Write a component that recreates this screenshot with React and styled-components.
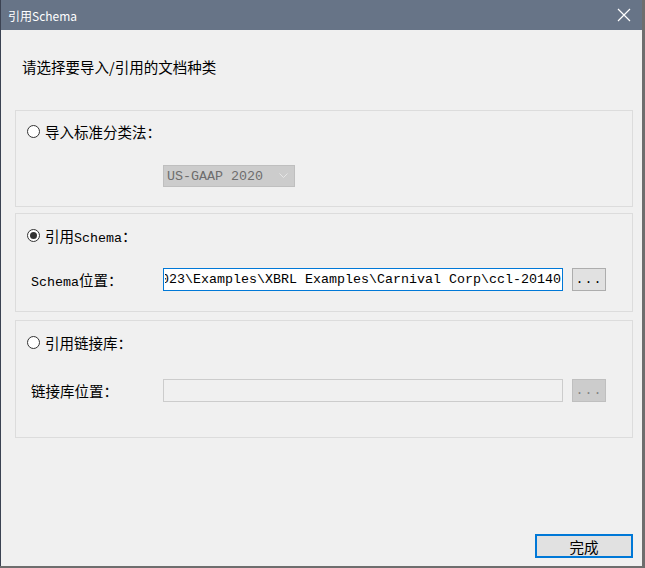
import React, { useState } from 'react'
import styled, { createGlobalStyle } from 'styled-components'

const GlobalStyle = createGlobalStyle`
  html, body { margin: 0; padding: 0; background: #6e6e6e; }
  body { font-family: "Noto Sans CJK SC", "Liberation Sans", sans-serif; }
`

const Frame = styled.div`
  width: 645px;
  height: 568px;
  background: #6e6e6e;
`
const Window = styled.div`
  width: 641px;
  height: 566px;
  border-left: 1px solid #3b4252;
  background: #f0f0f0;
  display: flex;
  flex-direction: column;
`
const TitleBar = styled.div`
  height: 30px;
  background: #677487;
  display: flex;
  align-items: center;
  justify-content: space-between;
  padding: 0 8px 0 7px;
  color: #fff;
  font-size: 12px;
`
const CloseBtn = styled.div`
  width: 14px;
  height: 14px;
  display: flex;
  margin-right: 3px;
`
const Content = styled.div`
  flex: 1;
  display: flex;
  flex-direction: column;
  padding: 0 9px 0 14px;
`
const Prompt = styled.div`
  margin: 27px 0 0 7px;
  height: 20px;
  line-height: 20px;
  font-size: 14.5px;
  color: #000;
`
const Groups = styled.div`
  margin-top: 33px;
  display: flex;
  flex-direction: column;
  gap: 6px;
`
const Group = styled.div`
  border: 1px solid #dcdcdc;
  height: ${p => p.$h}px;
  box-sizing: border-box;
  margin-top: ${p => p.$mt || 0}px;
  padding-top: ${p => p.$top}px;
  display: flex;
  flex-direction: column;
`
const RadioRow = styled.label`
  display: flex;
  align-items: center;
  height: 20px;
  padding-left: 11px;
  gap: 5px;
  font-size: 14.5px;
  color: #000;
  cursor: default;
`
const Mono = styled.span`
  font-family: "Liberation Mono", "Noto Sans CJK SC", monospace;
  font-size: 13.33px;
`
const RadioDot = styled.span`
  width: 11px;
  height: 11px;
  border-radius: 50%;
  border: 1px solid #333;
  background: #fff;
  display: flex;
  align-items: center;
  justify-content: center;
  &::after {
    content: "";
    width: 7px;
    height: 7px;
    border-radius: 50%;
    background: ${p => (p.$on ? '#333' : 'transparent')};
  }
`
const FieldRow = styled.div`
  display: flex;
  align-items: center;
  margin-top: ${p => p.$gap}px;
  padding-left: 15px;
`
const FieldLabel = styled.div`
  width: 132px;
  font-size: 14.5px;
  color: #000;
`
const Select = styled.div`
  width: 132px;
  height: 22px;
  box-sizing: border-box;
  background: #cccccc;
  border: 1px solid #bfbfbf;
  display: flex;
  align-items: center;
  justify-content: space-between;
  padding: 0 6px 0 3px;
  color: #6d6d6d;
  font-family: "Liberation Mono", monospace;
  font-size: 13.33px;
`
const PathInput = styled.input`
  width: 400px;
  height: 23px;
  box-sizing: border-box;
  border: 1px solid ${p => (p.disabled ? '#cccccc' : '#0078d7')};
  background: ${p => (p.disabled ? '#f0f0f0' : '#fff')};
  outline: none;
  padding: 0 1px;
  text-indent: -4px;
  font-family: "Liberation Mono", monospace;
  font-size: 13.33px;
  color: #000;
`
const BrowseBtn = styled.button`
  margin-left: 9px;
  width: 34px;
  height: 23px;
  box-sizing: border-box;
  border: 1px solid ${p => (p.disabled ? '#bfbfbf' : '#adadad')};
  background: ${p => (p.disabled ? '#cccccc' : '#e1e1e1')};
  color: ${p => (p.disabled ? '#838383' : '#000')};
  font-family: "Liberation Mono", monospace;
  font-size: 13.33px;
  padding: 0;
  letter-spacing: 1px;
`
const Footer = styled.div`
  margin-top: auto;
  display: flex;
  justify-content: flex-end;
  padding-bottom: 8px;
`
const FinishBtn = styled.button`
  width: 98px;
  height: 24px;
  box-sizing: border-box;
  border: 2px solid #0078d7;
  background: #e1e1e1;
  font-family: "Noto Sans CJK SC", sans-serif;
  font-size: 14.5px;
  color: #000;
  padding: 0;
`

const visiblePath = '023\\Examples\\XBRL Examples\\Carnival Corp\\ccl-20140'

export default function App() {
  const [mode, setMode] = useState('schema')
  return (
    <Frame>
      <GlobalStyle />
      <Window>
        <TitleBar>
          <span>引用Schema</span>
          <CloseBtn>
            <svg width="14" height="14" viewBox="0 0 14 14">
              <path d="M1 1 L13 13 M13 1 L1 13" stroke="#fff" strokeWidth="1.2" />
            </svg>
          </CloseBtn>
        </TitleBar>
        <Content>
          <Prompt>请选择要导入/引用的文档种类</Prompt>
          <Groups>
            <Group $h={97} $top={10}>
              <RadioRow onClick={() => setMode('taxonomy')}>
                <RadioDot $on={mode === 'taxonomy'} />
                导入标准分类法：
              </RadioRow>
              <FieldRow $gap={24}>
                <FieldLabel />
                <Select>
                  <span>US-GAAP 2020</span>
                  <svg width="9" height="6" viewBox="0 0 9 6">
                    <path d="M0.5 0.5 L4.5 4.5 L8.5 0.5" stroke="#e6e6e6" fill="none" />
                  </svg>
                </Select>
              </FieldRow>
            </Group>
            <Group $h={99} $top={11}>
              <RadioRow onClick={() => setMode('schema')}>
                <RadioDot $on={mode === 'schema'} />
                <span>引用<Mono>Schema</Mono>：</span>
              </RadioRow>
              <FieldRow $gap={23}>
                <FieldLabel><Mono>Schema</Mono>位置：</FieldLabel>
                <PathInput defaultValue={visiblePath} />
                <BrowseBtn>...</BrowseBtn>
              </FieldRow>
            </Group>
            <Group $h={118} $top={11} $mt={2}>
              <RadioRow onClick={() => setMode('library')}>
                <RadioDot $on={mode === 'library'} />
                引用链接库：
              </RadioRow>
              <FieldRow $gap={27}>
                <FieldLabel>链接库位置：</FieldLabel>
                <PathInput disabled />
                <BrowseBtn disabled>...</BrowseBtn>
              </FieldRow>
            </Group>
          </Groups>
          <Footer>
            <FinishBtn>完成</FinishBtn>
          </Footer>
        </Content>
      </Window>
    </Frame>
  )
}
